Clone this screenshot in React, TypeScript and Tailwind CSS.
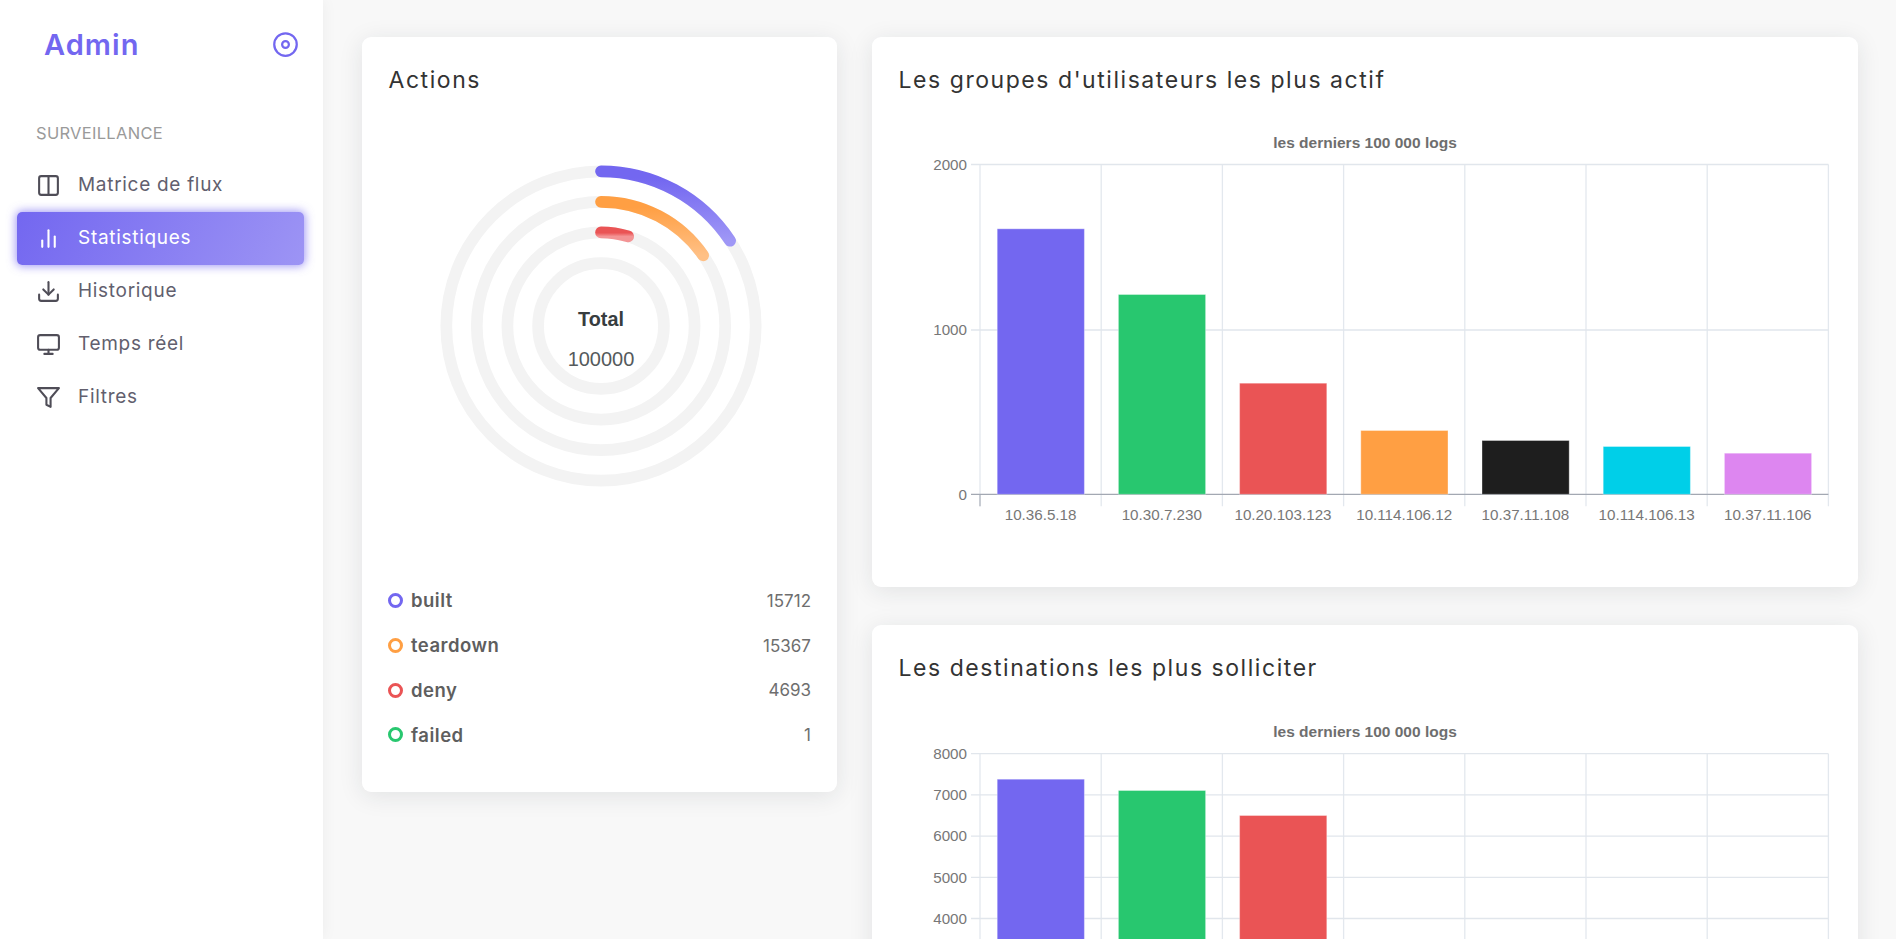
import { FiDisc, FiColumns, FiBarChart2, FiDownload, FiMonitor, FiFilter } from "react-icons/fi";

const BAR_COLORS = ["#7367f0", "#28c76f", "#ea5455", "#ff9f43", "#1e1e1e", "#00cfe8", "#dd86f0"];
const LABELS = ["10.36.5.18", "10.30.7.230", "10.20.103.123", "10.114.106.12", "10.37.11.108", "10.114.106.13", "10.37.11.106"];
const X0 = 108;
const X_STEP = 121.2;
const ARIAL = '"Liberation Sans", Arial, sans-serif';

type ChartProps = {
  height: number;
  plotTop: number;
  plotBottom: number;
  ticks: { label: string; y: number }[];
  barTops: number[];
  showXLabels?: boolean;
};

function BarChart({ height, plotTop, plotBottom, ticks, barTops, showXLabels = true }: ChartProps) {
  const right = X0 + X_STEP * 7;
  const verticals = Array.from({ length: 8 }, (_, i) => X0 + X_STEP * i);
  return (
    <svg width={986} height={height} className="block" style={{ fontFamily: ARIAL }}>
      <text x={493} y={plotTop - 17} textAnchor="middle" fontSize={15.5} fontWeight={700} fill="#6e6e6e">
        les derniers 100 000 logs
      </text>
      {verticals.map((x) => (
        <line key={x} x1={x} x2={x} y1={plotTop} y2={plotBottom + 12} stroke="#e3e8ee" strokeWidth={1.3} />
      ))}
      {ticks.map((t) => (
        <g key={t.label}>
          <line x1={X0 - 9} x2={right} y1={t.y} y2={t.y} stroke={t.label === "0" ? "#a3a8b2" : "#e1e6ec"} strokeWidth={1.3} />
          <text x={95} y={t.y + 5.2} textAnchor="end" fontSize={15.2} fill="#777777">
            {t.label}
          </text>
        </g>
      ))}
      {barTops.map((top, i) => (
        <rect
          key={i}
          x={125.2 + X_STEP * i}
          y={top}
          width={87.2}
          height={plotBottom - top}
          fill={BAR_COLORS[i]}
          stroke="#ffffff"
          strokeOpacity={0.35}
          strokeWidth={1}
        />
      ))}
      <line x1={X0} x2={X0} y1={plotBottom} y2={plotBottom + 12} stroke="#a3a8b2" strokeWidth={1} />
      {showXLabels &&
        LABELS.map((l, i) => (
          <text key={l} x={X0 + X_STEP * (i + 0.5)} y={plotBottom + 26} textAnchor="middle" fontSize={15.2} fill="#777777">
            {l}
          </text>
        ))}
    </svg>
  );
}

function arcPath(cx: number, cy: number, r: number, pct: number) {
  const a = (pct / 100) * 2 * Math.PI;
  const x = cx + r * Math.sin(a);
  const y = cy - r * Math.cos(a);
  return `M ${cx} ${cy - r} A ${r} ${r} 0 0 1 ${x} ${y}`;
}

const RINGS = [
  { r: 154.7, pct: 15.712, id: "g1", from: "#7367f0", to: "#9f97f6" },
  { r: 124.2, pct: 15.367, id: "g2", from: "#ff9f43", to: "#ffc085" },
  { r: 93.6, pct: 4.693, id: "g3", from: "#ea5455", to: "#f39495" },
  { r: 62.9, pct: 0, id: "g4", from: "#28c76f", to: "#28c76f" },
];

function Donut() {
  const c = 165;
  return (
    <svg width={330} height={330} className="block" style={{ fontFamily: ARIAL }}>
      <defs>
        {RINGS.map((r) => (
          <linearGradient key={r.id} id={r.id} x1="0" y1="0" x2="0" y2="1">
            <stop offset="0.1" stopColor={r.from} />
            <stop offset="1" stopColor={r.to} />
          </linearGradient>
        ))}
      </defs>
      {RINGS.map((r) => (
        <circle key={r.r} cx={c} cy={c} r={r.r} fill="none" stroke="#f3f3f3" strokeWidth={11.7} />
      ))}
      {RINGS.filter((r) => r.pct > 0).map((r) => (
        <path
          key={r.id}
          d={arcPath(c, c, r.r, r.pct)}
          fill="none"
          stroke={`url(#${r.id})`}
          strokeWidth={11.7}
          strokeLinecap="round"
        />
      ))}
      <text x={c} y={c} textAnchor="middle" fontSize={19.8} fontWeight={700} fill="#373d3f">
        Total
      </text>
      <text x={c} y={c + 40} textAnchor="middle" fontSize={20} fill="#555a5c">
        100000
      </text>
    </svg>
  );
}

const NAV = [
  { label: "Matrice de flux", Icon: FiColumns },
  { label: "Statistiques", Icon: FiBarChart2, active: true },
  { label: "Historique", Icon: FiDownload },
  { label: "Temps réel", Icon: FiMonitor },
  { label: "Filtres", Icon: FiFilter },
];

const LEGEND = [
  { label: "built", value: "15712", color: "border-[#7367f0]" },
  { label: "teardown", value: "15367", color: "border-[#ff9f43]" },
  { label: "deny", value: "4693", color: "border-[#ea5455]" },
  { label: "failed", value: "1", color: "border-[#28c76f]" },
];

function Sidebar() {
  return (
    <aside className="w-[323px] shrink-0 h-full bg-white shadow-[0_0_15px_0_rgba(34,41,47,0.05)] z-10">
      <div className="flex items-center justify-between pl-[44px] pr-[24.5px] pt-[18px] h-[88px] pb-[18px]">
        <span className="text-[29px] font-semibold leading-none tracking-[1.05px] text-[#7367f0]">Admin</span>
        <FiDisc className="text-[#7367f0]" size={27} />
      </div>
      <div className="pl-[36px] pt-[35px] text-[16.5px] leading-[20px] text-[#9a9a9a] tracking-[0.3px]">SURVEILLANCE</div>
      <nav className="mt-[16px] flex flex-col pl-[17px] pr-[19px]">
        {NAV.map(({ label, Icon, active }) => (
          <div
            key={label}
            className={
              active
                ? "flex items-center h-[53px] rounded-[5px] pl-[19px] gap-[17px] text-white bg-[linear-gradient(118deg,#7367f0,rgba(115,103,240,0.7))] shadow-[0_0_10px_1px_rgba(115,103,240,0.7)]"
                : "flex items-center h-[53px] pl-[19px] gap-[17px] text-[#625f6e]"
            }
          >
            <Icon size={25} className={active ? "text-white" : "text-[#4f4d57]"} />
            <span className="text-[19px] tracking-[0.7px]">{label}</span>
          </div>
        ))}
      </nav>
    </aside>
  );
}

function CardTitle({ children }: { children: string }) {
  return (
    <h4 className="h-[63px] pt-[28px] pl-[26.5px] text-[23px] leading-[30px] tracking-[1.55px] text-[#333333]">{children}</h4>
  );
}

export default function App() {
  return (
    <div className="flex h-screen overflow-hidden bg-[#f8f8f8]" style={{ fontFamily: 'Inter, "Noto Sans", sans-serif' }}>
      <Sidebar />
      <main className="flex-1 flex items-start gap-[35px] pl-[39px] pt-[37px] overflow-hidden h-full">
        <section className="w-[475px] h-[755px] shrink-0 bg-white rounded-[9px] shadow-[0_4px_24px_0_rgba(34,41,47,0.1)]">
          <CardTitle>Actions</CardTitle>
          <div className="flex justify-center pl-[2px] pt-[61px] h-[479px]">
            <Donut />
          </div>
          <ul className="px-[26px] flex flex-col">
            {LEGEND.map((l) => (
              <li key={l.label} className="flex items-center justify-between h-[44.7px]">
                <div className="flex items-center gap-[8px]">
                  <span className={`w-[15px] h-[15px] -mt-[1px] rounded-full border-[3.5px] ${l.color}`} />
                  <span className="text-[18.5px] font-semibold tracking-[0.5px] text-[#5e5e5e]">{l.label}</span>
                </div>
                <span className="text-[17px] pt-[1px] text-[#6e6e6e]">{l.value}</span>
              </li>
            ))}
          </ul>
        </section>
        <div className="w-[986px] shrink-0 flex flex-col gap-[38px]">
          <section className="h-[550px] bg-white rounded-[9px] shadow-[0_4px_24px_0_rgba(34,41,47,0.1)]">
            <CardTitle>Les groupes d'utilisateurs les plus actif</CardTitle>
            <BarChart
              height={487}
              plotTop={64.5}
              plotBottom={394.3}
              ticks={[
                { label: "2000", y: 64.5 },
                { label: "1000", y: 230 },
                { label: "0", y: 394.3 },
              ]}
              barTops={[128.8, 194.5, 283.2, 330.5, 340.5, 346.5, 353.2]}
            />
          </section>
          <section className="h-[550px] shrink-0 bg-white rounded-[9px] shadow-[0_4px_24px_0_rgba(34,41,47,0.1)]">
            <CardTitle>Les destinations les plus solliciter</CardTitle>
            <BarChart
              height={487}
              plotTop={65.7}
              plotBottom={395.3}
              showXLabels={false}
              ticks={["8000", "7000", "6000", "5000", "4000"].map((label, i) => ({
                label,
                y: 65.7 + i * 41.2,
              }))}
              barTops={[91.2, 102.5, 127.5, 395, 395, 395, 395]}
            />
          </section>
        </div>
      </main>
    </div>
  );
}
